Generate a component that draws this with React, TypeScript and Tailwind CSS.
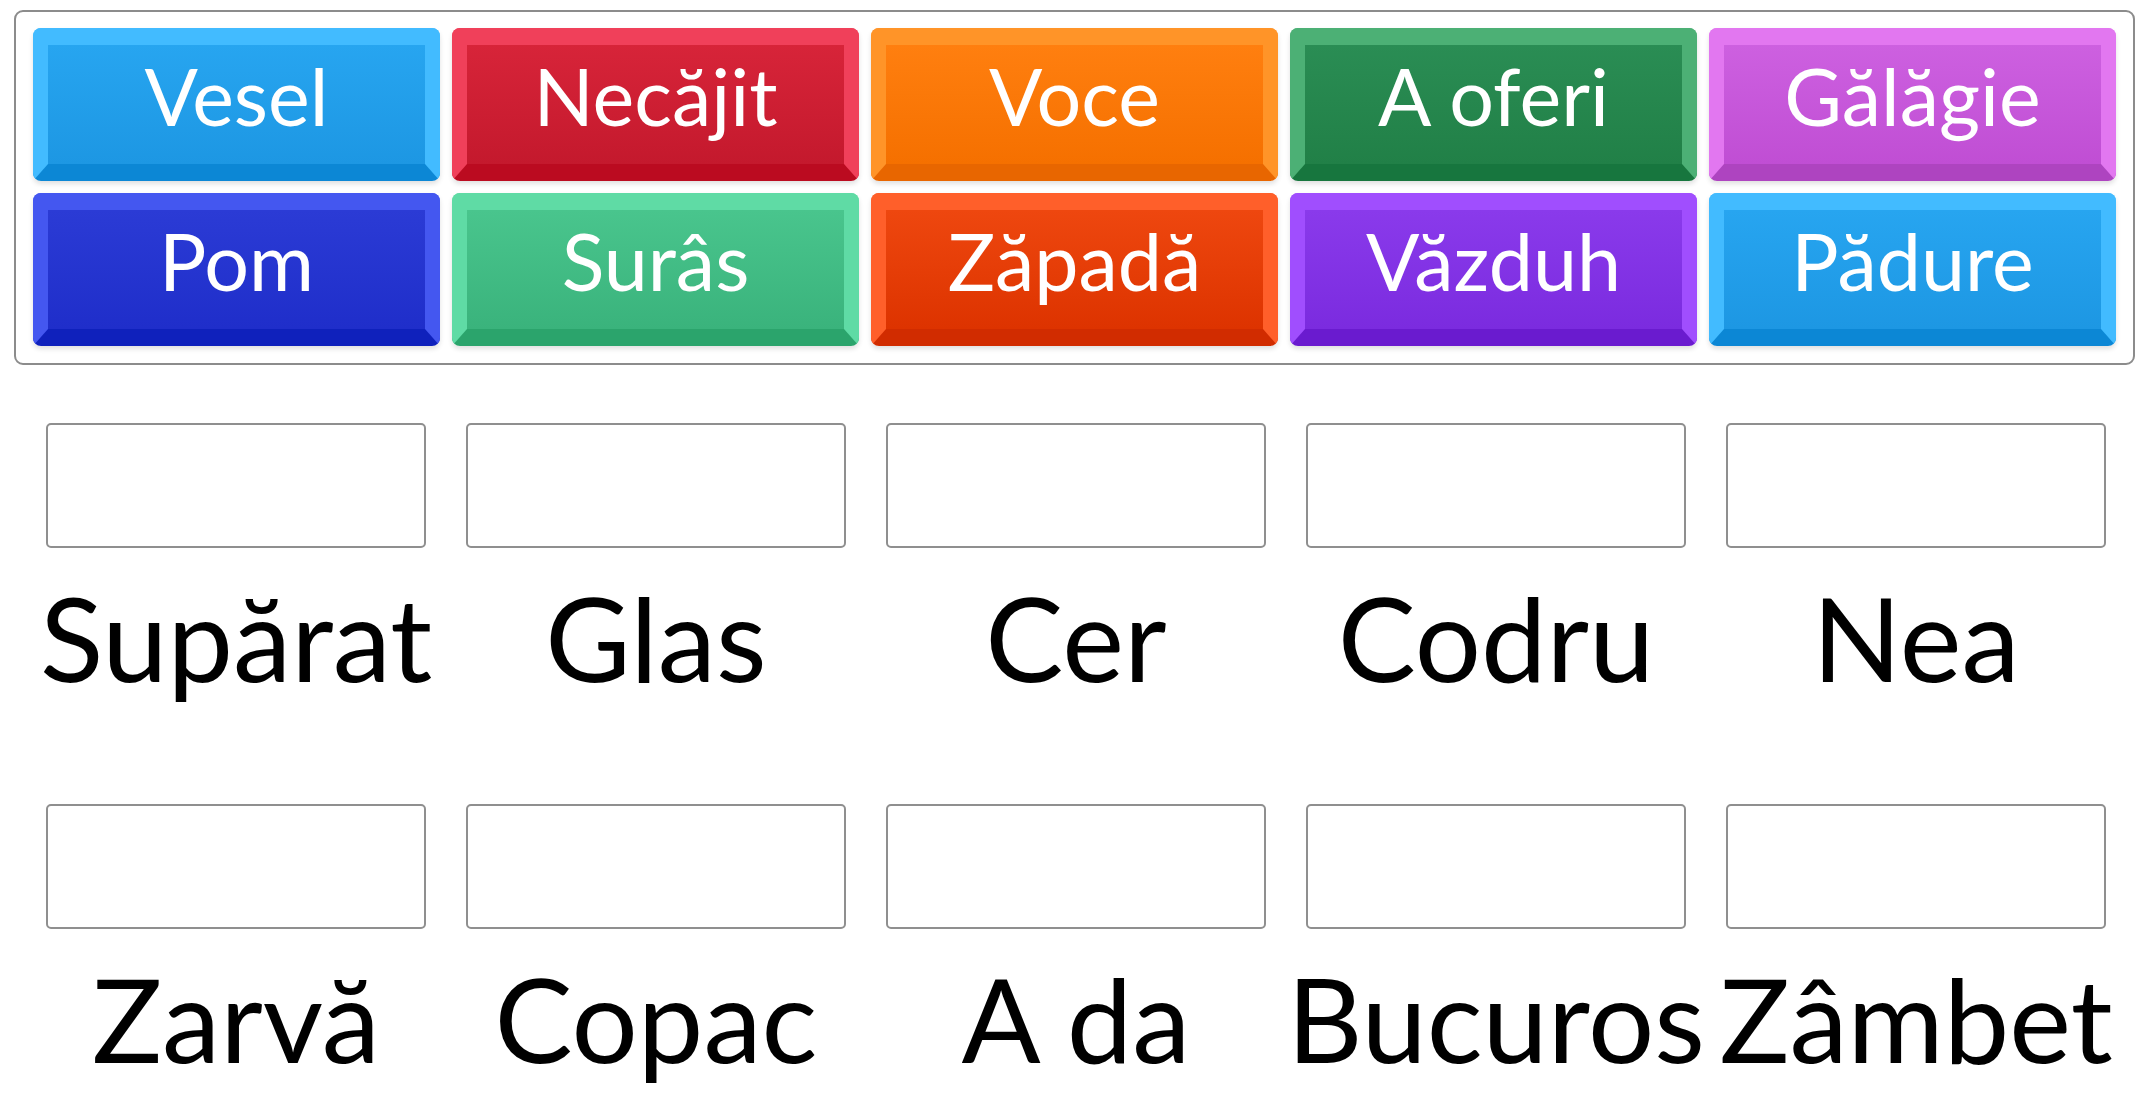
import React from 'react';

type Tile = { label: string; cls: string };

// bevelled answer tiles: light top/side bands, darker bottom band, gradient face
const tiles: Tile[] = [
  { label: 'Vesel', cls: 'border-[#42bbff] border-b-[#0c87d5] from-[#27a5f0] to-[#1d97e3]' },
  { label: 'Necăjit', cls: 'border-[#f0405a] border-b-[#bb0b20] from-[#d72439] to-[#c4192d]' },
  { label: 'Voce', cls: 'border-[#ff9428] border-b-[#e86600] from-[#ff7f0f] to-[#f57000]' },
  { label: 'A oferi', cls: 'border-[#4cb075] border-b-[#17763e] from-[#2a8d54] to-[#218047]' },
  { label: 'Gălăgie', cls: 'border-[#e277f0] border-b-[#ae44c0] from-[#cd60e0] to-[#c04ed4]' },
  { label: 'Pom', cls: 'border-[#4457f0] border-b-[#0f21bc] from-[#2b3bd5] to-[#1f2eca]' },
  { label: 'Surâs', cls: 'border-[#5fdba5] border-b-[#2ba46c] from-[#49c58d] to-[#3ab37c]' },
  { label: 'Zăpadă', cls: 'border-[#ff5f2a] border-b-[#d12c00] from-[#ee470f] to-[#dd3300]' },
  { label: 'Văzduh', cls: 'border-[#a04efe] border-b-[#6a1bcf] from-[#8a3aeb] to-[#7b2bdf]' },
  { label: 'Pădure', cls: 'border-[#42bbff] border-b-[#0c87d5] from-[#27a5f0] to-[#1d97e3]' },
];

const targets = ['Supărat', 'Glas', 'Cer', 'Codru', 'Nea', 'Zarvă', 'Copac', 'A da', 'Bucuros', 'Zâmbet'];

export default function App() {
  return (
    <div className="min-h-screen bg-white font-[Lato,'Open_Sans',sans-serif] pt-[10px]">
      {/* Word bank */}
      <div className="ml-[14px] w-[2121px] rounded-[9px] border-2 border-[#8c8c8c] bg-white pl-[17px] pr-[17px] pt-[16px] pb-[17px]">
        <div className="grid grid-cols-5 gap-[12px]">
          {tiles.map((t) => (
            <div
              key={t.label}
              className={`h-[153px] rounded-[8px] border-t-[17px] border-x-[15px] border-b-[17px] bg-linear-to-b shadow-[0_3px_5px_rgba(0,0,0,0.12)] ${t.cls}`}
            >
              <div className="flex h-full items-center justify-center pb-[18px] text-[79px] leading-none text-white whitespace-nowrap">
                {t.label}
              </div>
            </div>
          ))}
        </div>
      </div>

      {/* Drop targets */}
      <div className="ml-[26px] mt-[58px] grid w-[2100px] grid-cols-5 gap-y-[108px]">
        {targets.map((w) => (
          <div key={w} className="flex flex-col items-center">
            <div className="h-[125px] w-[380px] rounded-[5px] border-2 border-[#8f8f8f] bg-white" />
            <div className="mt-[31px] text-[117px] leading-none text-black whitespace-nowrap">{w}</div>
          </div>
        ))}
      </div>
    </div>
  );
}
